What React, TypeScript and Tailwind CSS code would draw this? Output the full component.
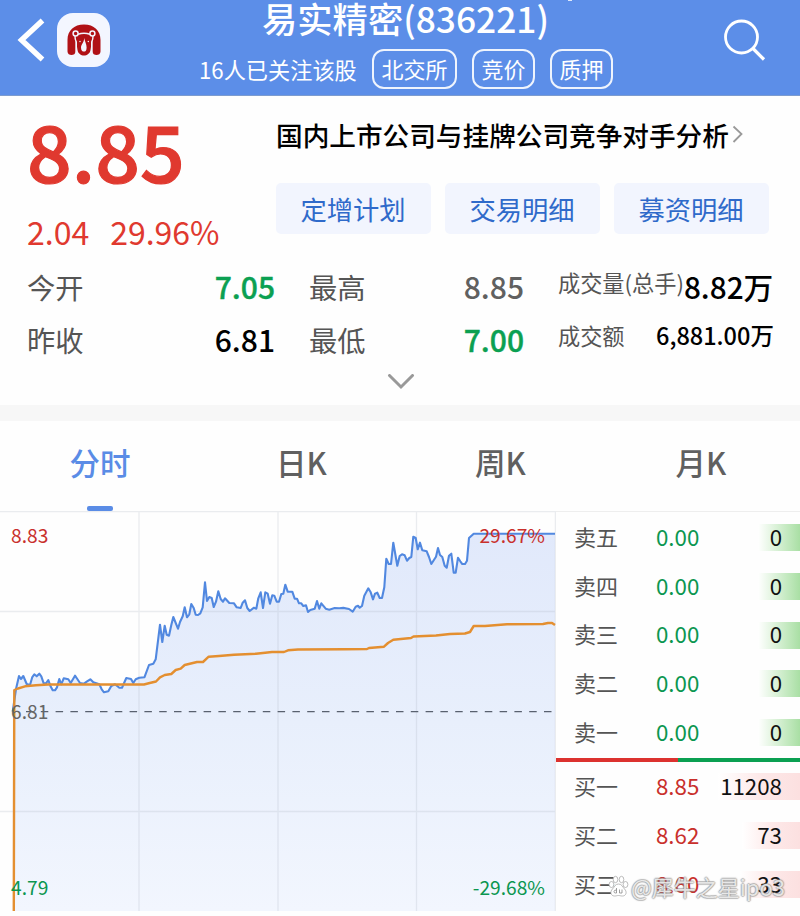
const FONT = "font-['Noto_Sans_CJK_SC',sans-serif]";

const PRICE =
  '12.7,711.7 16,689 19,676 21,679 23.3,676 26.7,684 30,685 32.3,677 34.3,674.3 36.7,676.3 39.3,673.7 41.3,676.3 43.7,683.3 46,683.3 48.3,680 50.3,685.7 52.7,690.3 55,690.3 57,687.3 59.3,679 61.3,684.3 63.7,678.3 68.3,679.3 70.7,683 75,675.7 77.3,679 80,683 84,683.7 86.7,681.7 90.3,679.3 93.3,682.3 99.3,684.3 101.7,689.3 104,692.3 108.3,691.3 111.3,686 115,684.3 119.3,687.7 122,687.7 126.3,678 131,679 133.3,683 135.7,679.3 139.3,677.7 144.5,677.2 149,665 153.3,663.7 155.7,659.3 160,624.7 162.3,642 164.7,625.7 166.7,634.7 169,635.7 171.3,625 173.3,617 178,628.7 180,622 182.7,616.3 184.7,607.3 187,617.3 189.3,614.3 191.3,604 193.7,608 195.7,614.7 198,615 200.3,613.3 202.7,607.3 205,582.3 207,601 209.3,597 211.7,598 213.7,607 216,601.7 218.3,591.3 220.7,599 223,601.7 225,598.3 229.3,603 234,603.3 236.7,607.3 240.7,608 242.7,602.7 245,600.3 247.3,608 249.7,611 254,607.7 256.3,608.7 258.3,598.3 260.7,592.3 263,608 265.3,592.3 267.7,593.7 270,603.7 272.3,595.3 274.3,595.7 276.7,601.7 279,601.7 281.3,594 283.3,593.7 285.3,584.7 287.7,591.7 292.3,591.7 294.7,598.7 297,598.7 299,603.3 301.3,603.3 303.3,606 306,605.3 308,612 310.3,610 314.7,608.7 317,601 319.3,608.7 321.3,603.3 325.7,608.7 329.3,609.7 334.7,608 339.3,608.3 343.3,607.9 349,609 352.7,611.7 355.7,606.7 358,605.7 359.7,607.7 362,606 364.3,595.7 368.3,588.3 370.7,592.3 373,599.3 375,593.7 377.3,592.7 379.7,598 382,598 384.3,587.3 386.3,558.7 388.7,564 391,564 393.3,542.7 397.3,565.7 399.7,556 402,554.3 404.7,555.3 407,560.7 409.3,558 411.3,557 413.3,536.7 415.7,538 417.7,549.3 420,542.7 422.3,550.3 426.7,551.3 429,557 431.3,564 436,556.7 438,548 440,555 442.3,557 444.7,565.7 446.7,567.7 449,555.7 451.3,553.7 453.7,572.7 455.7,572.7 458,557.7 460.3,561.3 462.3,564 465,564 467,560.7 469,538 473.7,533.7 555,533.7';

const AVERAGE =
  '13.8,911 14.3,690 18,688.5 25,686.3 36,685.3 48,684.5 144,684.5 149.7,683 156,681.5 160,677.3 164.7,675 171.3,674 175.7,670 180.7,668.7 184.7,665 197,662 203,662 208.7,656.7 219,656 234,654.7 256,653.7 272,652 284,652 288,650.3 298,649.5 345,649.3 367,649 369,648 384,646.7 388,643 393.3,639.7 411,638 413.5,636.5 436,635.5 450,634 465,633.5 470,632 473.7,626 485,626 507,624.3 543,624 548,623 552,623 555,625';

const SELLS = ['卖五', '卖四', '卖三', '卖二', '卖一'];
const BUYS = [
  { label: '买一', price: '8.85', qty: '11208', bar: 'w-[82px]' },
  { label: '买二', price: '8.62', qty: '73', bar: 'w-[58px]' },
  { label: '买三', price: '8.60', qty: '33', bar: 'w-[60px]' },
];
const TABS = [
  { label: '分时', box: 'w-[200px]', active: true },
  { label: '日K', box: 'w-[203px]', active: false },
  { label: '周K', box: 'w-[195px]', active: false },
  { label: '月K', box: 'w-[206px]', active: false },
];

function Logo() {
  return (
    <div className="flex h-[54px] w-[53px] items-center justify-center rounded-[16px] bg-[#f3f6ff]">
      <svg width="34" height="32" viewBox="0 0 34 32">
        <path d="M0.5 27.500V16C0.5 6.500 7 0.500 17 0.500S33.500 6.500 33.500 16V27.500C33.500 32.300 25.500 32.300 25.500 27.500V14H8.500V27.500C8.500 32.300 0.500 32.300 0.500 27.500Z" fill="#b01116" />
        <path d="M8.500 13H25.500L23.500 26C22.500 33.300 11.500 33.300 10.500 26Z" fill="#b01116" />
        <path d="M9.300 30V18Q7.800 15 8 12M24.700 30V18Q26.200 15 26 12" fill="none" stroke="#f3f6ff" strokeWidth="1.400" />
        <path d="M11 10.300Q17 8 23 10.300" fill="none" stroke="#f3f6ff" strokeWidth="1.500" />
        <circle cx="8.600" cy="9.500" r="2.500" fill="#b01116" stroke="#f3f6ff" strokeWidth="1.500" />
        <circle cx="25.400" cy="9.500" r="2.500" fill="#b01116" stroke="#f3f6ff" strokeWidth="1.500" />
        <path d="M17.300 14C18 18 19.600 20 19.600 23.500C19.600 26.500 18.500 27.600 17 27.600S14 26.500 14 23.500C14 20.500 16.800 19 17.300 14Z" fill="#f3f6ff" />
        <circle cx="13" cy="17.500" r="0.700" fill="#fff" />
        <circle cx="21.300" cy="17.500" r="0.700" fill="#fff" />
      </svg>
    </div>
  );
}

function Header() {
  return (
    <header className="flex h-[96px] border-b border-[#7d9ccf] bg-[#5c8ee8] text-white">
      <div className="flex w-[198px] items-start pt-[13px] pl-[17px]">
        <svg className="mt-[5px]" width="28" height="44" viewBox="0 0 28 44">
          <path d="M25.500 2.500L4.500 22L25.500 41.500" fill="none" stroke="white" strokeWidth="5.400" />
        </svg>
        <div className="ml-[12px]"><Logo /></div>
      </div>
      <div className="relative w-[415px]">
        <i className="absolute top-0 left-[370px] h-px w-[4px] bg-white/80" />
        <h1 className="h-[38px] pl-[64px] text-[35.3px] leading-[35px] font-medium whitespace-nowrap">易实精密(836221)</h1>
        <div className="flex h-[57px] items-start pt-[11px]">
          <span className="w-[174px] pl-px text-[22.2px] leading-[40px] whitespace-nowrap">16人已关注该股</span>
          <div className="flex gap-[15px] text-[22px] leading-[35px]">
            <span className="h-[40px] w-[85px] rounded-[12px] border-2 border-white/90 text-center">北交所</span>
            <span className="h-[40px] w-[63px] rounded-[12px] border-2 border-white/90 text-center">竞价</span>
            <span className="h-[40px] w-[63px] rounded-[12px] border-2 border-white/90 text-center">质押</span>
          </div>
        </div>
      </div>
      <svg className="mt-[18px] ml-[109px]" width="45" height="45" viewBox="0 0 45 45">
        <circle cx="19.500" cy="19" r="16" fill="none" stroke="white" strokeWidth="2.800" />
        <path d="M30.500 30L42 41.500" stroke="white" strokeWidth="3.200" />
      </svg>
    </header>
  );
}

function Summary() {
  return (
    <section className="h-[309px] bg-[#fefefe]">
      <div className="flex h-[164px]">
        <div className="w-[276px] pl-[27px] text-[#e0392f]">
          <div className="h-[111px] pt-[14px] text-[78.5px] leading-[79px] font-medium [-webkit-text-stroke:1.2px_#e0392f]">8.85</div>
          <div className="flex gap-[21px] text-[32px] leading-[48px]">
            <span>2.04</span>
            <span>29.96%</span>
          </div>
        </div>
        <div>
          <div className="flex h-[87px] items-start pt-[19px]">
            <b className="text-[26.65px] leading-[40px] font-medium whitespace-nowrap text-black">国内上市公司与挂牌公司竞争对手分析</b>
            <svg className="mt-[10px] ml-[3px]" width="13" height="19" viewBox="0 0 13 19">
              <path d="M1.500 1.500L9.500 9L1.500 17" fill="none" stroke="#999" strokeWidth="1.800" />
            </svg>
          </div>
          <div className="flex gap-[14px] text-center text-[26.3px] leading-[52px] text-[#2f6aca]">
            {['定增计划', '交易明细', '募资明细'].map((t) => (
              <span key={t} className="h-[51px] w-[155px] rounded-[5px] bg-[#f2f5fe] pr-px">{t}</span>
            ))}
          </div>
        </div>
      </div>
      <div className="flex h-[53px] items-center pl-[27px] text-[28.3px] leading-[53px] whitespace-nowrap text-[#555]">
        <span className="w-[142px]">今开</span>
        <b className="w-[106px] text-right text-[30px] font-medium text-[#0ba052] [-webkit-text-stroke:0.4px_#0ba052]">7.05</b>
        <span className="w-[142px] pl-[34px]">最高</span>
        <b className="w-[107px] text-right text-[30px] font-medium text-[#606060]">8.85</b>
        <span className="-mt-[8px] ml-[34px] text-[22.2px]">成交量(总手)</span>
        <b className="text-[29.7px] font-medium text-black">8.82万</b>
      </div>
      <div className="flex h-[53px] items-center pl-[27px] text-[28.3px] leading-[53px] whitespace-nowrap text-[#555]">
        <span className="w-[142px]">昨收</span>
        <b className="w-[106px] text-right text-[30px] font-medium text-black">6.81</b>
        <span className="w-[142px] pl-[34px]">最低</span>
        <b className="w-[107px] text-right text-[30px] font-medium text-[#0ba052] [-webkit-text-stroke:0.4px_#0ba052]">7.00</b>
        <span className="-mt-[8px] ml-[34px] w-[98px] text-[22.2px]">成交额</span>
        <b className="-mt-[9px] text-[23.5px] font-medium text-black">6,881.00万</b>
      </div>
      <div className="flex justify-center pt-[8px] pl-[2px]">
        <svg width="28" height="18" viewBox="0 0 28 18">
          <path d="M2.500 1.500L14 13L25.500 1.500" fill="none" stroke="#999" strokeWidth="3" strokeLinecap="round" />
        </svg>
      </div>
    </section>
  );
}

function Tabs() {
  return (
    <nav className="flex h-[90px] bg-[#fefefe] text-[30.5px] font-medium">
      {TABS.map((t) => (
        <div key={t.label} className={`${t.box} flex shrink-0 flex-col items-center ${t.active ? 'text-[#5a8ce6]' : 'text-[#606060]'}`}>
          <span className="h-[85px] leading-[82px]">{t.label}</span>
          {t.active && <i className="h-[5px] w-[26px] rounded-[2px] bg-[#5a8ce6]" />}
        </div>
      ))}
    </nav>
  );
}

function Chart() {
  return (
    <div className="relative h-[405px] w-[556px] text-[19.2px] leading-[24px]">
      <svg className="block" width="556" height="405" viewBox="0 511 556 405">
        <defs>
          <linearGradient id="area" x1="0" y1="0" x2="0" y2="1">
            <stop offset="0" stopColor="#e1e9fb" />
            <stop offset="0.500" stopColor="#e8effc" />
            <stop offset="1" stopColor="#f2f6fe" />
          </linearGradient>
        </defs>
        <polygon points={`13,911 ${PRICE} 555,911`} fill="url(#area)" />
        <g stroke="#a5adbc" strokeOpacity="0.220" strokeWidth="1.300">
          <path d="M0 511.500H556M0 611.500H556M0 811.500H556M139 512V911M278 512V911M416.500 512V911M555.400 512V911" />
        </g>
        <path d="M26 711.700H553" stroke="#59616f" strokeWidth="1.300" strokeDasharray="7.500 7.300" />
        <polyline points={PRICE} fill="none" stroke="#5188e0" strokeWidth="2.100" strokeLinejoin="round" />
        <polyline points={AVERAGE} fill="none" stroke="#e48f30" strokeWidth="2.400" strokeLinejoin="round" />
      </svg>
      <span className="absolute top-[12px] left-[11px] text-[#c9302c]">8.83</span>
      <span className="absolute top-[12px] right-[11px] text-[#c9302c]">29.67%</span>
      <span className="absolute top-[188px] left-[11px] text-[#666]">6.81</span>
      <span className="absolute top-[364px] left-[11px] text-[#0b9650]">4.79</span>
      <span className="absolute top-[364px] right-[11px] text-[#0b9650]">-29.68%</span>
    </div>
  );
}

function Row({ label, price, qty, sell, bar }: { label: string; price: string; qty: string; sell: boolean; bar: string }) {
  return (
    <div className={`relative flex items-center pl-[18px] text-[22px] leading-[47px] whitespace-nowrap ${sell ? 'h-[48.8px]' : 'h-[49px]'}`}>
      <i className={`absolute top-[11px] right-0 h-[27px] bg-linear-to-r ${bar} ${sell ? 'from-white to-[#a9dfa4]' : 'from-white via-[#fde9e9] to-[#fce0e0]'}`} />
      <span className="-mt-[2px] w-[82px] text-[#555]">{label}</span>
      <span className={`-mt-[2px] w-[56px] text-[22.3px] ${sell ? 'text-[#0b9650]' : 'text-[#c9302c]'}`}>{price}</span>
      <span className="relative -mt-[2px] w-[70px] text-right text-[22.300px] text-[#111]">{qty}</span>
    </div>
  );
}

function Watermark() {
  return (
    <div className="absolute top-[358px] left-[52px] flex items-center gap-[2px] text-[22px] leading-[32px] whitespace-nowrap text-white/75 [text-shadow:1px_0_1px_#8888,-1px_0_1px_#8888,0_1px_1px_#8888,0_-1px_1px_#8888]">
      <svg width="21" height="22" viewBox="0 0 21 22" fill="white" stroke="#aaa" strokeWidth="0.800">
        <ellipse cx="3.500" cy="9.500" rx="2.400" ry="3" />
        <ellipse cx="7.500" cy="4.500" rx="2.300" ry="3.200" />
        <ellipse cx="13.500" cy="4.500" rx="2.300" ry="3.200" />
        <ellipse cx="17.500" cy="9.500" rx="2.400" ry="3" />
        <path d="M10.500 9C7 9 6.500 12 4.500 14C1.500 17 3 21 6.500 21C8.500 21 9 20.500 10.500 20.500S12.500 21 14.500 21C18 21 19.500 17 16.500 14C14.500 12 14 9 10.500 9Z" />
        <path d="M8.500 13V18H7.500Q6 18 6 16.500T8.500 15M11.500 14.500V18H14V14.500" fill="none" stroke="#888" />
      </svg>
      <span>@犀牛之星ipo3</span>
    </div>
  );
}

function OrderBook() {
  return (
    <div className="relative h-[405px] w-[244px] overflow-hidden border-t border-[#eee] bg-[#fefefe]">
      <div className="mt-[1px] h-[244.500px]">
        {SELLS.map((s) => (
          <Row key={s} label={s} price="0.00" qty="0" sell bar="w-[42px]" />
        ))}
      </div>
      <div className="flex h-[4.500px]">
        <i className="w-[122px] bg-[#dc322f]" />
        <i className="flex-1 bg-[#0aa052]" />
      </div>
      {BUYS.map((b) => (
        <Row key={b.label} {...b} sell={false} />
      ))}
      <Watermark />
    </div>
  );
}

export default function App() {
  return (
    <main className={`${FONT} h-[916px] w-[800px] overflow-hidden bg-[#fefefe]`}>
      <Header />
      <Summary />
      <div className="h-[16px] bg-[#f7f7f7]" />
      <Tabs />
      <div className="flex">
        <Chart />
        <OrderBook />
      </div>
    </main>
  );
}
